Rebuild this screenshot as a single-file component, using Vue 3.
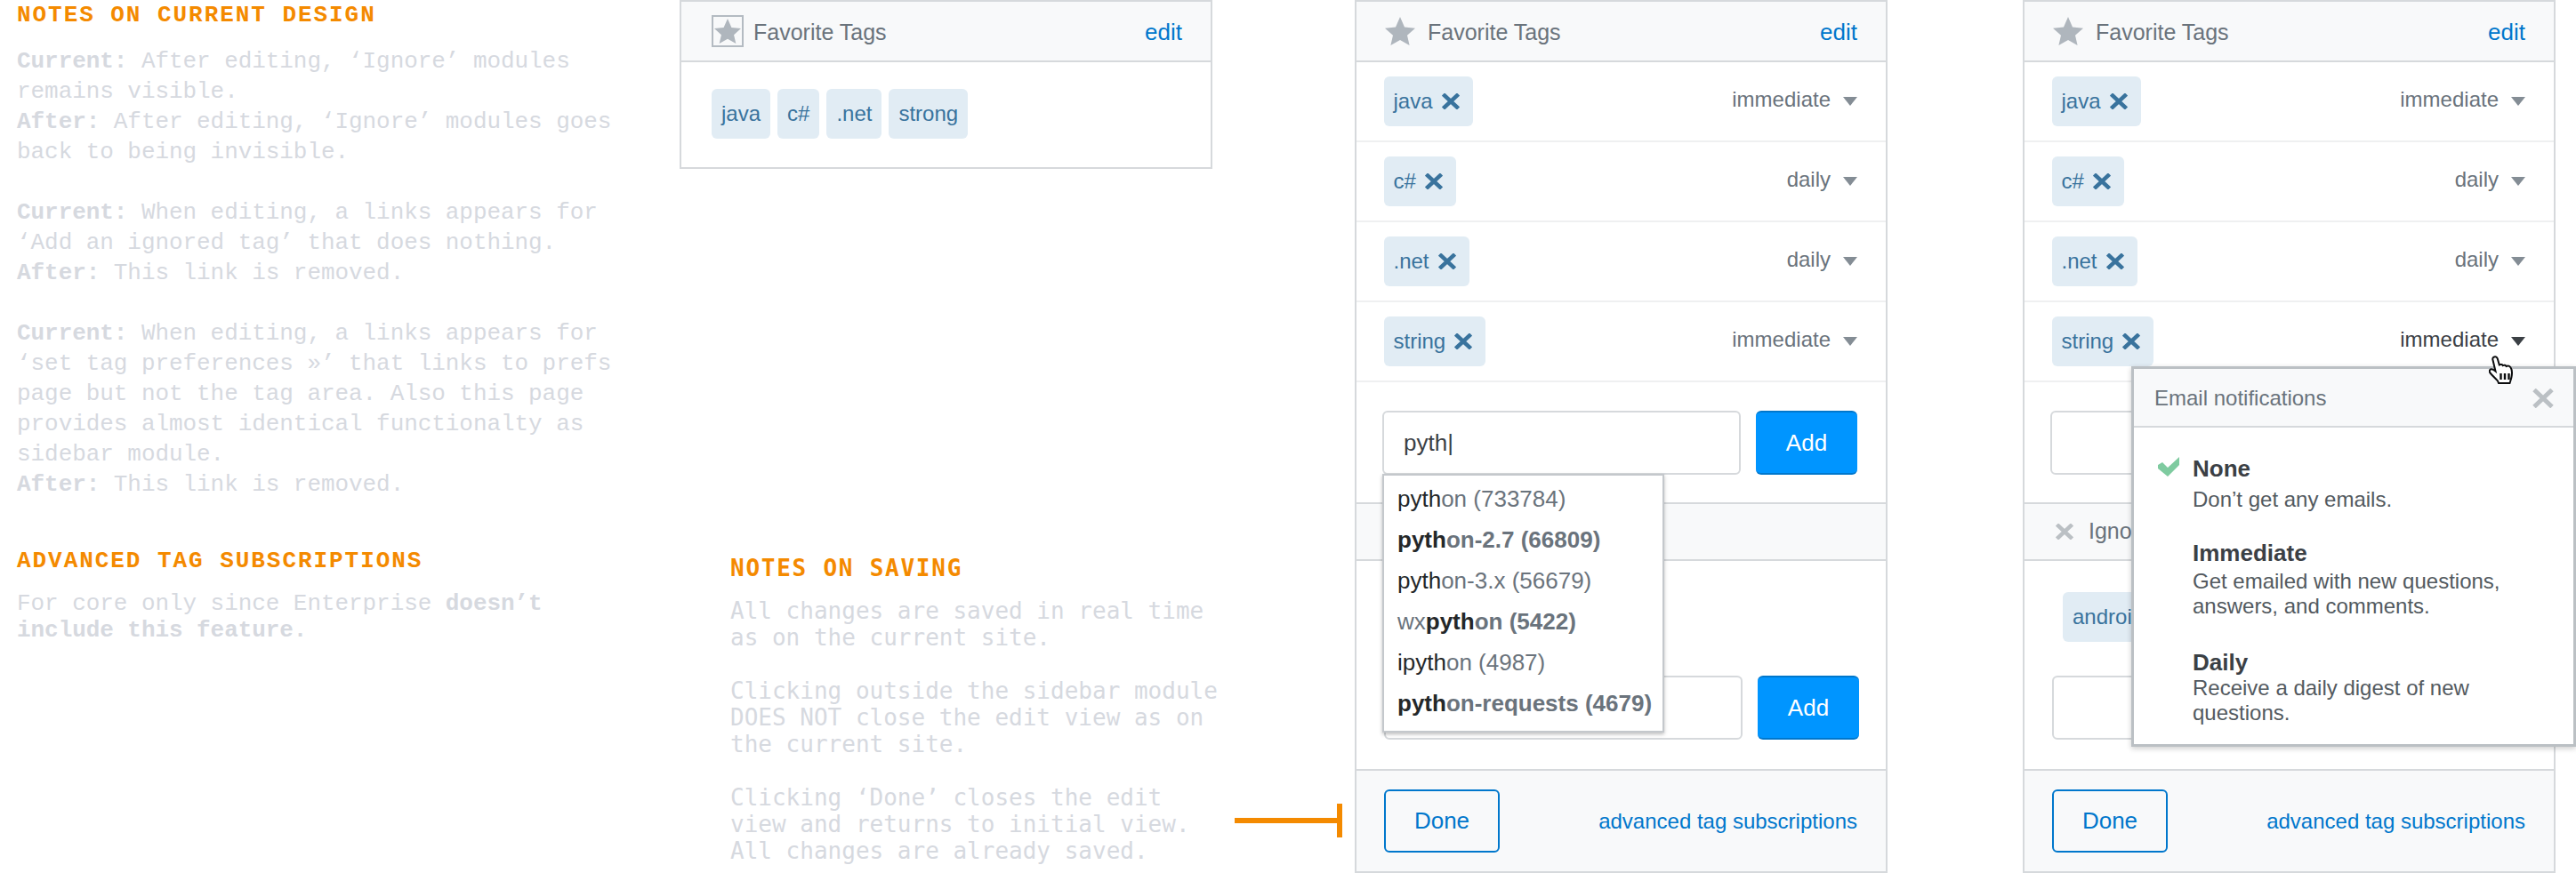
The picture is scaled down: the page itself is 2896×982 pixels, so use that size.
<script setup>
import { ref } from 'vue';

const staticTags = ref(['java', 'c#', '.net', 'strong']);

const favorites = ref([
  { name: 'java', freq: 'immediate' },
  { name: 'c#', freq: 'daily' },
  { name: '.net', freq: 'daily' },
  { name: 'string', freq: 'immediate' }
]);

const suggestions = ref([
  { pre: '', match: 'pyth', rest: 'on (733784)', bold: false },
  { pre: '', match: 'pyth', rest: 'on-2.7 (66809)', bold: true },
  { pre: '', match: 'pyth', rest: 'on-3.x (56679)', bold: false },
  { pre: 'wx', match: 'pyth', rest: 'on (5422)', bold: true },
  { pre: '', match: 'ipyth', rest: 'on (4987)', bold: false },
  { pre: '', match: 'pyth', rest: 'on-requests (4679)', bold: true }
]);
</script>

<template>
  <div class="page">
    <!-- notes on the left -->
    <div class="col-notes">
      <h2 class="note-head">NOTES ON CURRENT DESIGN</h2>
      <p class="note first">
        <b>Current:</b> After editing, ‘Ignore’ modules<br>remains visible.<br>
        <b>After:</b> After editing, ‘Ignore’ modules goes<br>back to being invisible.
      </p>
      <p class="note">
        <b>Current:</b> When editing, a links appears for<br>‘Add an ignored tag’ that does nothing.<br>
        <b>After:</b> This link is removed.
      </p>
      <p class="note">
        <b>Current:</b> When editing, a links appears for<br>‘set tag preferences »’ that links to prefs<br>
        page but not the tag area. Also this page<br>provides almost identical functionalty as<br>sidebar module.<br>
        <b>After:</b> This link is removed.
      </p>
      <h2 class="note-head second">ADVANCED TAG SUBSCRIPTIONS</h2>
      <p class="note tight">
        For core only since Enterprise <b>doesn’t<br>include this feature.</b>
      </p>
    </div>

    <!-- initial view + saving notes -->
    <div class="col-initial">
      <div class="panel panel-small">
        <div class="panel-head">
          <span class="star-box">
            <svg class="star" viewBox="0 0 34 32"><path d="M17 0l5 11.500 12 1.200-9 8 2.600 11.300L17 26l-10.600 6L9 20.700l-9-8 12-1.200z"/></svg>
          </span>
          <span class="panel-title boxed">Favorite Tags</span>
          <a class="edit">edit</a>
        </div>
        <div class="tag-list">
          <span v-for="t in staticTags" :key="t" class="tag">{{ t }}</span>
        </div>
      </div>

      <div class="saving">
        <h2 class="saving-head">NOTES ON SAVING</h2>
        <p class="saving-text">All changes are saved in real time<br>as on the current site.</p>
        <p class="saving-text">Clicking outside the sidebar module<br>DOES NOT close the edit view as on<br>the current site.</p>
        <p class="saving-text">Clicking ‘Done’ closes the edit<br>view and returns to initial view.<br>All changes are already saved.</p>
      </div>
    </div>

    <!-- edit view with autocomplete -->
    <div class="panel panel-full">
      <div class="panel-head">
        <svg class="star" viewBox="0 0 34 32"><path d="M17 0l5 11.500 12 1.200-9 8 2.600 11.300L17 26l-10.600 6L9 20.700l-9-8 12-1.200z"/></svg>
        <span class="panel-title">Favorite Tags</span>
        <a class="edit">edit</a>
      </div>
      <div v-for="f in favorites" :key="f.name" class="tag-row">
        <span class="tag removable">
          {{ f.name }}
          <svg class="x" viewBox="0 0 20 18"><path d="M1.500 1l17 16M18.500 1l-17 16"/></svg>
        </span>
        <span class="freq">{{ f.freq }}<i class="arrow"></i></span>
      </div>
      <div class="add-row first-add">
        <div class="input typed">pyth|</div>
        <button class="add-btn">Add</button>
        <div class="suggest">
          <div v-for="s in suggestions" :key="s.pre + s.match + s.rest" class="suggest-item" :class="{ strong: s.bold }"><span class="pre">{{ s.pre }}</span><span class="match">{{ s.match }}</span>{{ s.rest }}</div>
        </div>
      </div>
      <div class="band"></div>
      <div class="ignored">
        <div class="add-row second-add">
          <div class="input"></div>
          <button class="add-btn">Add</button>
        </div>
      </div>
      <div class="panel-foot">
        <button class="done">Done</button>
        <a class="adv">advanced tag subscriptions</a>
      </div>
      <div class="pointer-line"></div>
    </div>

    <!-- edit view with notification popup -->
    <div class="panel panel-full third">
      <div class="panel-head">
        <svg class="star" viewBox="0 0 34 32"><path d="M17 0l5 11.500 12 1.200-9 8 2.600 11.300L17 26l-10.600 6L9 20.700l-9-8 12-1.200z"/></svg>
        <span class="panel-title">Favorite Tags</span>
        <a class="edit">edit</a>
      </div>
      <div v-for="(f, i) in favorites" :key="f.name" class="tag-row">
        <span class="tag removable">
          {{ f.name }}
          <svg class="x" viewBox="0 0 20 18"><path d="M1.500 1l17 16M18.500 1l-17 16"/></svg>
        </span>
        <span class="freq" :class="{ hover: i === 3 }">{{ f.freq }}<i class="arrow"></i></span>
      </div>
      <div class="add-row first-add">
        <div class="input"></div>
        <button class="add-btn">Add</button>
      </div>
      <div class="band">
        <svg class="x grey" viewBox="0 0 20 18"><path d="M1.500 1l17 16M18.500 1l-17 16"/></svg>
        <span class="band-title">Ignored Tags</span>
      </div>
      <div class="ignored">
        <span class="tag android">android</span>
        <div class="add-row second-add">
          <div class="input"></div>
          <button class="add-btn">Add</button>
        </div>
      </div>
      <div class="panel-foot">
        <button class="done">Done</button>
        <a class="adv">advanced tag subscriptions</a>
      </div>

      <div class="popup">
        <div class="popup-head">
          <span>Email notifications</span>
          <svg class="popup-close" viewBox="0 0 24 22"><path d="M2 1.500l20 19M22 1.500l-20 19"/></svg>
        </div>
        <div class="popup-body">
          <div class="opt opt-none">
            <svg class="check" viewBox="0 0 24 22"><path d="M0 9l5-3 6 6L24 0v9L11 22 0 13z"/></svg>
            <div class="opt-title">None</div>
            <div class="opt-text first-text">Don’t get any emails.</div>
          </div>
          <div class="opt opt-imm">
            <div class="opt-title">Immediate</div>
            <div class="opt-text">Get emailed with new questions,<br>answers, and comments.</div>
          </div>
          <div class="opt opt-daily">
            <div class="opt-title">Daily</div>
            <div class="opt-text">Receive a daily digest of new<br>questions.</div>
          </div>
        </div>
      </div>

      <svg class="cursor" viewBox="0 0 29 32">
        <path d="M6 1.500c1.800-.8 3.200.2 3.800 2l2 7c1.800-1 3.400-.6 4 .6 1.500-.8 3.200-.4 3.800.9 1.800-.8 4-.2 5 1.500 1.600 2.500 1.600 7 .9 10.500-.4 2-1 3.500-1.500 5.500l-.5 1.500H11l-1-2.500c-2-2.500-6-6-8.500-9-1.400-2-.6-4 1-4.300 1.800-.3 3.300.8 5 2.300L4.500 5c-.5-1.500 0-3 1.500-3.500z" fill="#fff" stroke="#0c0d0e" stroke-width="2"/>
        <path d="M13.500 20v7M18 20v7M22.500 20v7" fill="none" stroke="#0c0d0e" stroke-width="2.400"/>
      </svg>
    </div>
  </div>
</template>

<style>
html, body {
  margin: 0;
  background: #fff;
}
</style>

<style scoped>
.page {
  display: flex;
  width: 2896px;
  height: 982px;
  overflow: hidden;
  background: #fff;
  font-family: "Liberation Sans", Arial, sans-serif;
}

.col-notes {
  flex: none;
  width: 764px;
  padding: 2px 0 0 19px;
  box-sizing: border-box;
}

.note-head {
  margin: 0;
  font: bold 26px/30px "Liberation Mono", monospace;
  letter-spacing: 1.95px;
  color: #f48a00;
}

.note-head.second {
  margin-top: 54px;
}

.note {
  margin: 34px 0 0;
  font: 26px/34px "Liberation Mono", monospace;
  letter-spacing: -0.06px;
  color: #d6d9df;
}

.note.first {
  margin-top: 20px;
}

.note.tight {
  margin-top: 18px;
  line-height: 30px;
}

.note b {
  font-weight: bold;
}

.col-initial {
  flex: none;
  width: 759px;
}

.panel {
  box-sizing: border-box;
  border: 2px solid #d6d9dc;
  background: #fff;
  width: 599px;
}

.panel-small {
  height: 190px;
}

.panel-full {
  flex: none;
  position: relative;
  height: 982px;
  display: flex;
  flex-direction: column;
}

.third {
  margin-left: 152px;
}

.panel-head {
  height: 68px;
  box-sizing: border-box;
  border-bottom: 2px solid #d6d9dc;
  background: #f8f9fa;
  display: flex;
  align-items: center;
  padding: 0 32px;
  flex: none;
}

.star {
  width: 34px;
  height: 32px;
  fill: #afb6bd;
  flex: none;
}

.star-box {
  box-sizing: border-box;
  width: 36px;
  height: 36px;
  border: 2px solid #b4bbc2;
  display: flex;
  align-items: center;
  justify-content: center;
  margin-left: 2px;
  flex: none;
}

.star-box .star {
  width: 30px;
  height: 30px;
}

.panel-title {
  margin-left: 14px;
  padding-top: 3px;
  font-size: 25px;
  color: #6a737c;
  white-space: nowrap;
}

.panel-title.boxed {
  margin-left: 11px;
}

.band-title {
  margin-left: 17px;
  margin-top: -2px;
  font-size: 25px;
  color: #6a737c;
  white-space: nowrap;
}

.edit {
  margin-left: auto;
  padding-top: 3px;
  font-size: 26px;
  color: #0077cc;
}

.tag-list {
  display: flex;
  gap: 8px;
  padding: 30px 34px;
}

.tag {
  display: inline-flex;
  align-items: center;
  gap: 10px;
  height: 56px;
  box-sizing: border-box;
  padding: 0 11px;
  border-radius: 6px;
  background: #e1ecf4;
  color: #39739d;
  font-size: 24px;
  white-space: nowrap;
}

.tag.removable {
  padding: 0 15px 0 10.500px;
}

.x {
  width: 20px;
  height: 18px;
  fill: none;
  stroke: #39739d;
  stroke-width: 4.500;
  flex: none;
}

.x.grey {
  stroke: #bbc0c4;
  margin-left: 2px;
}

.tag-row {
  flex: none;
  height: 90px;
  box-sizing: border-box;
  border-bottom: 2px solid #eff0f1;
  display: flex;
  align-items: center;
  justify-content: space-between;
  padding: 0 32px 0 31px;
}

.freq {
  display: flex;
  align-items: center;
  gap: 14px;
  font-size: 24px;
  color: #6a737c;
  margin-top: -4px;
}

.arrow {
  width: 0;
  height: 0;
  margin-top: 4px;
  border-left: 8px solid transparent;
  border-right: 8px solid transparent;
  border-top: 10px solid #848d95;
}

.freq.hover {
  color: #3b4045;
}

.freq.hover .arrow {
  border-top-color: #3b4045;
}

.add-row {
  position: relative;
  display: flex;
  gap: 17px;
  height: 72px;
  box-sizing: content-box;
}

.first-add {
  flex: none;
  padding: 32px 32px 31px 29px;
  border-bottom: 2px solid #d6d9dc;
}

.input {
  flex: 1;
  box-sizing: border-box;
  border: 2px solid #d6d9dc;
  border-radius: 6px;
  background: #fff;
  display: flex;
  align-items: center;
  padding-left: 22px;
  font-size: 26px;
  color: #3b4045;
}

.add-btn {
  flex: none;
  width: 114px;
  box-sizing: border-box;
  border: 0;
  border-top: 2px solid #07c;
  border-bottom: 2px solid #07c;
  border-radius: 6px;
  background: #0095ff;
  color: #fff;
  font: 26px "Liberation Sans", Arial, sans-serif;
}

.suggest {
  position: absolute;
  left: 29px;
  top: 103px;
  z-index: 2;
  width: 317px;
  height: 291px;
  box-sizing: border-box;
  padding: 3px 0 0 15px;
  background: #fff;
  border: 2px solid #c4c8cc;
  box-shadow: 0 2px 4px rgba(0, 0, 0, .25);
  font-size: 26px;
  color: #6a737c;
}

.suggest-item {
  height: 46px;
  line-height: 46px;
  white-space: nowrap;
}

.suggest-item.strong {
  font-weight: bold;
}

.pre {
  font-weight: normal;
}

.match {
  color: #242729;
}

.band {
  flex: none;
  height: 64px;
  box-sizing: border-box;
  border-bottom: 2px solid #d6d9dc;
  background: #f8f9fa;
  display: flex;
  align-items: center;
  padding-left: 33px;
}

.ignored {
  flex: 1;
  position: relative;
  display: flex;
  flex-direction: column;
  padding: 35px 30px 0 31px;
}

.android {
  align-self: flex-start;
  margin-left: 12px;
}

.second-add {
  margin-top: auto;
  margin-bottom: 33px;
}

.panel-foot {
  flex: none;
  height: 115px;
  box-sizing: border-box;
  border-top: 2px solid #d6d9dc;
  background: #f8f9fa;
  display: flex;
  align-items: center;
  justify-content: space-between;
  padding: 0 32px 0 31px;
}

.done {
  width: 130px;
  height: 71px;
  margin-top: -1px;
  box-sizing: border-box;
  border: 2px solid #07c;
  border-radius: 6px;
  background: transparent;
  color: #07c;
  font: 26px "Liberation Sans", Arial, sans-serif;
}

.adv {
  font-size: 24px;
  color: #07c;
}

.pointer-line {
  position: absolute;
  left: -137px;
  top: 918px;
  width: 121px;
  height: 6px;
  background: #f48a00;
}

.pointer-line::after {
  content: "";
  position: absolute;
  right: 0;
  top: -16px;
  width: 6px;
  height: 38px;
  background: #f48a00;
}

.popup {
  position: absolute;
  left: 120px;
  top: 410px;
  z-index: 2;
  width: 500px;
  height: 428px;
  box-sizing: border-box;
  border: 3px solid #bbc0c4;
  background: #fff;
  box-shadow: 0 2px 6px rgba(0, 0, 0, .2);
}

.popup-head {
  height: 66px;
  box-sizing: border-box;
  border-bottom: 2px solid #d6d9dc;
  background: #f8f9fa;
  display: flex;
  align-items: center;
  justify-content: space-between;
  padding: 2px 22px 0 23px;
  font-size: 24px;
  color: #6a737c;
}

.popup-close {
  width: 24px;
  height: 22px;
  fill: none;
  stroke: #bbc0c4;
  stroke-width: 5;
}

.popup-body {
  padding: 0 20px 0 66px;
}

.opt {
  position: relative;
}

.opt-none {
  padding-top: 31px;
}

.opt-imm {
  padding-top: 31px;
}

.opt-daily {
  padding-top: 34px;
}

.opt-title {
  font-size: 26px;
  font-weight: bold;
  line-height: 30px;
  color: #3b4045;
}

.opt-text {
  font-size: 24px;
  line-height: 28px;
  color: #535a60;
}

.opt-imm .opt-text {
  margin-top: 3px;
}

.first-text {
  margin-top: 6px;
}

.check {
  position: absolute;
  left: -39px;
  top: 33px;
  width: 24px;
  height: 22px;
  fill: #7fcba0;
}

.cursor {
  position: absolute;
  left: 522px;
  top: 398px;
  z-index: 3;
  width: 29px;
  height: 32px;
}

.saving {
  margin: 434px 0 0 57px;
}

.saving-head {
  margin: 0;
  font: bold 26px/30px "DejaVu Sans Mono", monospace;
  letter-spacing: 1.75px;
  color: #f48a00;
}

.saving-text {
  margin: 30px 0 0;
  font: 26px/30px "DejaVu Sans Mono", monospace;
  color: #d6d9df;
  white-space: nowrap;
}

.saving-head + .saving-text {
  margin-top: 18px;
}
</style>
